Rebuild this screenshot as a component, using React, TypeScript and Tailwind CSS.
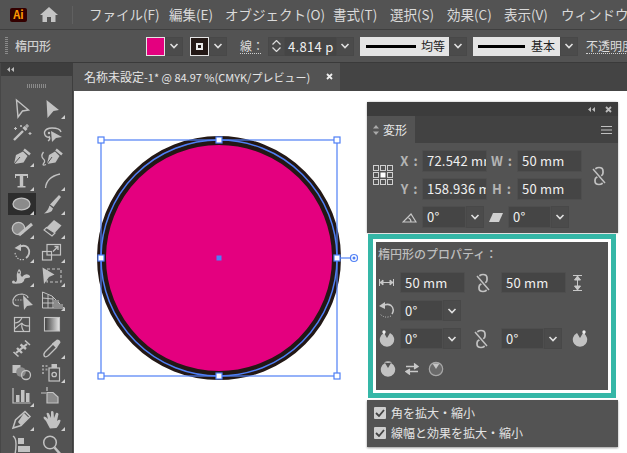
import React from "react";

const c = "#c2c2c2";
const bg = "#535353";
const jp = { fontFamily: '"Noto Sans CJK JP", "Noto Sans", sans-serif' };

const Chevron = () => (
  <svg width="10" height="6" viewBox="0 0 10 6"><path d="M1.5 1 L5 4.5 L8.5 1" fill="none" stroke="#e0e0e0" strokeWidth="1.6" /></svg>
);

const DD = ({ w = "w-[18px]", h = "h-[20px]" }: { w?: string; h?: string }) => (
  <div className={`${w} ${h} flex items-center justify-center bg-[#4b4b4b] border border-[#484848] shrink-0`}><Chevron /></div>
);

const Input = ({ children, w, h = "h-[22px]" }: { children: React.ReactNode; w: string; h?: string }) => (
  <div className={`${w} ${h} bg-[#454545] border border-[#4e4e4e] rounded-[1px] text-[#f0f0f0] text-[13px] tracking-[0.2px] pl-[4px] flex items-center overflow-hidden whitespace-nowrap shrink-0 font-['Open_Sans',sans-serif]`}>{children}</div>
);

const Combo = ({ children, w }: { children: React.ReactNode; w: string }) => (
  <div className="flex shrink-0">
    <Input w={w}>{children}</Input>
    <DD h="h-[22px]" />
  </div>
);

const Link = () => (
  <svg width="18" height="20" viewBox="0 0 18 20" fill="none" stroke={c}>
    <g strokeWidth="1.700">
      <path d="M5 6 V5 Q5 1.500 9 1.500 Q13 1.500 13 5 V7 Q13 9 11 10 L7 11 Q5 12 5 14 V15 Q5 18.500 9 18.500 Q13 18.500 13 15 V14" />
    </g>
    <path d="M3 3 L15 17" stroke={bg} strokeWidth="3.500" />
    <path d="M3 3 L15 17" strokeWidth="1.500" />
  </svg>
);

const Pie = ({ handle, outline, x = 8 }: { handle?: boolean; outline?: boolean; x?: number }) => (
  <svg width="18" height="18" viewBox="0 0 18 18">
    {outline ? (
      <>
        <circle cx="9" cy="9" r="6.7" fill="#6a6a6a" stroke="#a8a8a8" strokeWidth="1.2" />
        <path d="M5.5 3.5 L12.5 3.5 L9 9 Z" fill="#c4c4c4" />
      </>
    ) : (
      <>
        <path d="M6 3 A7.2 7.2 0 1 0 12 3 L9 8 Z" fill={c} />
        {handle && <path d={`M${x} 6 L${x} 1`} stroke={c} strokeWidth="2" />}
        {handle && <circle cx={x} cy="2" r="1.7" fill="#eee" />}
        {!handle && <path d="M5 2.5 A7.2 7.2 0 0 1 13 2.5 L9 3 Z" fill={c} />}
      </>
    )}
  </svg>
);

const Corner = () => <path d="M26 19 L26 23 L22 23 Z" fill="#cfcfcf" />;

const tools: React.ReactNode[] = [
  <path d="M8.500 4 L20.500 14 L14.500 15 L10 21 Z" fill="none" stroke={c} strokeWidth="1.400" />,
  <><path d="M7.500 4 L20 14 L14.500 15 L8.500 22 Z" fill={c} /><Corner /></>,
  <><path d="M6 20 L15 11" stroke={c} strokeWidth="2.400" /><path d="M15.500 7 L18.500 10" stroke={c} strokeWidth="3" /><path d="M19 4 V8 M17 6 H21 M7.500 7 V10 M6 8.500 H9 M22 12 V15 M20.500 13.500 H23.500 M13 5 V7 M12 6 H14" stroke={c} strokeWidth="1.100" /></>,
  <><path d="M10 17.500 Q5 17 5.500 12 Q7 8 13 8 Q21 8 22 12" fill="none" stroke={c} strokeWidth="1.400" /><path d="M10 16 Q12 19 9 21" fill="none" stroke={c} strokeWidth="1.300" /><path d="M12 11 L23 17 L17 18 L13 22 Z" fill={c} /><circle cx="10" cy="13" r="1.200" fill={c} /></>,
  <><path d="M6 20 L8 11 L15 7.500 L19.500 12 L15.500 18.500 Z" fill={c} /><path d="M16 5.500 L22 10.500" stroke={c} strokeWidth="2.500" /><path d="M6 20 L12 13" stroke={bg} strokeWidth="1" /><Corner /></>,
  <><path d="M8 20 L10 11 L16 7.500 L20.500 12 L16.500 18.500 Z" fill={c} /><path d="M17 5.500 L23 10.500" stroke={c} strokeWidth="2.500" /><path d="M8 20 L13 13" stroke={bg} strokeWidth="1" /><path d="M4.500 8 Q1.500 12 4 14.500 Q7 17 4.500 19.500 Q3 22 7 20.500" fill="none" stroke={c} strokeWidth="1.300" /></>,
  <><path d="M7 6 H20 V10 H19 V8 H15.200 V18 H17.500 V19.500 H9.500 V18 H11.800 V8 H8 V10 H7 Z" fill={c} /><Corner /></>,
  <><path d="M6.500 20 Q7.500 9 21 6" fill="none" stroke={c} strokeWidth="1.300" /><Corner /></>,
  <><ellipse cx="13.500" cy="11" rx="8.500" ry="5.800" fill="#8b8b8b" stroke={c} strokeWidth="1.300" /><path d="M26 18 L26 22 L22 22 Z" fill="#cfcfcf" /></>,
  <><path d="M20 3 L22 5 L14.500 15 L11 12.500 Z" fill={c} /><path d="M10.500 13.500 L14 16.500 Q13 21 5 21.500 Q9 19 10.500 13.500 Z" fill={c} /><Corner /></>,
  <><circle cx="10.500" cy="12.500" r="6.200" fill="#8b8b8b" stroke={c} strokeWidth="1.300" /><path d="M11 19 L24 8" stroke={c} strokeWidth="3" /><Corner /></>,
  <><path d="M15 4 L22.500 9.500 L13 20 L5 14 Z" fill={c} /><path d="M7.500 11.500 L16 17 L13 20 L5 14 Z" fill={bg} stroke={c} strokeWidth="1.100" /><Corner /></>,
  <><path d="M12 6.500 Q19 4 21 10 Q22 15 18 18" fill="none" stroke={c} strokeWidth="1.800" /><path d="M13 4 V11 L6.500 8 Z" fill={c} /><path d="M16 19.500 Q9 21 7 13" fill="none" stroke={c} strokeWidth="1.200" strokeDasharray="1.400 1.400" /><Corner /></>,
  <><rect x="3.500" y="11.500" width="9" height="8.500" fill="none" stroke={c} strokeWidth="1.200" /><rect x="8" y="4.500" width="13.500" height="10.500" fill="none" stroke={c} strokeWidth="1.200" /><path d="M14 11.500 L19 6.500 M15.500 6.500 H19 V10" fill="none" stroke={c} strokeWidth="1.300" /><Corner /></>,
  <><path d="M5 18 Q9 19 9 15 Q8 9 11 5 Q14 7 12.500 11 L14 13 Q17 9 21 11 Q24 14 19 14 Q16 14 16 17 Q14 20 10 19.500 Q7 20 5 19 Z" fill={c} /><circle cx="5.500" cy="18" r="1.500" fill={c} /><circle cx="11" cy="8.500" r=".9" fill={bg} /><Corner /></>,
  <><path d="M3.500 3.500 L15.500 10.500 L10 13 L5 20 Z" fill={c} /><rect x="8" y="5" width="14" height="13" fill="none" stroke={c} strokeWidth="1.100" strokeDasharray="3 2" /><Corner /></>,
  <><path d="M11 18 Q4 18 5 12 Q7 6 14 6 Q20 7 20 10" fill="none" stroke={c} strokeWidth="1.200" /><path d="M7 12 H15" stroke={c} strokeWidth="1.200" strokeDasharray="1.300 1.300" /><path d="M15 7 L25 17 L19 18 L16 22 Z" fill={c} /></>,
  <><path d="M3.500 4 L3.500 20 L25 20 L20 15 L13 8 Z M3.500 10 L14 11 M3.500 15 L20 15 M9 6.500 V20 M14 9 V20" fill="none" stroke={c} strokeWidth="1" /><path d="M14 12 H20 V14 H14 Z M14 16 H24 V19 H14 Z" fill="#8b8b8b" /><Corner /></>,
  <><rect x="6.500" y="5.500" width="15" height="14" fill="none" stroke={c} strokeWidth="1.200" /><path d="M6.500 11 Q12 11 14 5.500 M14 11 Q15 14 21.500 14 M6.500 17 Q11 13 14 11 M14 11 Q13 16 16 19.500" fill="none" stroke={c} strokeWidth="1.100" /></>,
  <><defs><linearGradient id="gr"><stop offset="0" stopColor="#3a3a3a" /><stop offset="1" stopColor="#e8e8e8" /></linearGradient></defs><rect x="5.500" y="5.500" width="15" height="13.500" fill="url(#gr)" stroke={c} strokeWidth="1.100" /></>,
  <><path d="M8 17 L19 8" stroke={c} strokeWidth="2.200" /><path d="M5.500 16 L10.500 20.500 M17 4.500 L22 9" stroke={c} strokeWidth="1.600" /><path d="M9 12 L14 17 M12.500 8.500 L18 13" stroke={c} strokeWidth="2.400" /></>,
  <><path d="M5.500 20.500 Q4 18.500 6 16 L14 8 L17.500 11.500 L9.500 19.500 Q7 21.500 5.500 20.500 Z" fill={bg} stroke={c} strokeWidth="1.300" /><path d="M13 7.500 L18 3.500 Q21 3.500 21.500 6.500 L18 11.500 Z" fill={c} /><Corner /></>,
  <><rect x="4.500" y="5" width="8" height="8" fill={c} /><circle cx="13" cy="12" r="4.800" fill="#8b8b8b" /><circle cx="18" cy="15" r="4.500" fill="none" stroke={c} strokeWidth="1.300" /></>,
  <><rect x="10" y="8" width="10.500" height="13" fill={bg} stroke={c} strokeWidth="1.200" /><rect x="12.500" y="4" width="5.500" height="4" fill={c} /><circle cx="15.200" cy="14.500" r="2.200" fill="none" stroke={c} strokeWidth="1.300" /><path d="M3 6 h2 M6.500 6 h2 M3 9.500 h2 M6.500 9.500 h2 M3 13 h2" stroke="#9a9a9a" strokeWidth="2" /><Corner /></>,
  <><path d="M5 4 V19 H22.500" fill="none" stroke={c} strokeWidth="1.200" /><rect x="8" y="11" width="3.500" height="7" fill={c} /><rect x="13" y="6" width="3.500" height="12" fill={c} /><rect x="18" y="9" width="3.500" height="9" fill={c} /><Corner /></>,
  <><path d="M2 9 H7 M8 3 V7" stroke={c} strokeWidth="1.200" /><path d="M8 8.500 H14 L19 13 V19 H8 Z" fill="#8b8b8b" stroke={c} strokeWidth="1.200" /></>,
  <><path d="M5 20 L7.500 12 L17 3.500 L22 8.500 L13 17.500 Z" fill={bg} stroke={c} strokeWidth="1.500" /><path d="M16 5 L20.500 9.500 L13 17.500 L10 14 Z" fill={c} /><Corner /></>,
  <><path d="M7 13 Q3.500 10 5 8.500 Q7 8.500 9 11 L7.500 5.500 Q8.500 4 10 5.500 L12 10 L12 3.500 Q13.500 2.500 14.500 4 L15 10 L17 5 Q18.500 4 19.500 6 L18 13 Q20 11 21.500 12 Q21.500 15 17.500 20 L11 20.500 Q9 17 7 13 Z" fill={c} /><Corner /></>,
  <><path d="M5 4 Q8 6 8 12 T7 22" fill="none" stroke={c} strokeWidth="1.400" /><path d="M10 6 H16 V12 H10 Z M10 14 H22 V20 H10 Z" fill={c} /></>,
  <><circle cx="11" cy="10.500" r="6.300" fill="none" stroke={c} strokeWidth="1.500" /><path d="M15.500 15.500 L22 23" stroke={c} strokeWidth="2.500" /></>,
];

const ToolIcon = ({ children, selected }: { children: React.ReactNode; selected?: boolean }) => (
  <div className="w-[28px] h-[24px] mx-auto flex items-start justify-center">
    <svg className={selected ? "bg-[#2d2d2d] mt-px" : ""} width="28" height={selected ? 22 : 24} viewBox={selected ? "0 0 28 22" : "0 0 28 24"}>{children}</svg>
  </div>
);

const menu = [
  ["ファイル(F)", "w-[80px]"],
  ["編集(E)", "w-[56px]"],
  ["オブジェクト(O)", "w-[108px]"],
  ["書式(T)", "w-[57px]"],
  ["選択(S)", "w-[57px]"],
  ["効果(C)", "w-[57px]"],
  ["表示(V)", "w-[57px]"],
  ["ウィンドウ(W)", "w-[100px]"],
];

const Canvas = () => {
  const hs = [[101, 140], [219, 140], [337, 140], [101, 258], [337, 258], [101, 376], [219, 376], [337, 376]];
  const ox = 74, oy = 91;
  return (
    <svg className="absolute left-0 top-0" width="553" height="362" viewBox={`${ox} ${oy} 553 362`}>
      <circle cx="219" cy="258" r="117.500" fill="#e4007f" stroke="#231815" strokeWidth="9" />
      <circle cx="219" cy="258" r="118" fill="none" stroke="#4f7ff5" strokeWidth="1.500" />
      <rect x="101" y="140" width="236" height="236" fill="none" stroke="#4f7ff5" strokeWidth="1.200" />
      <path d="M337 258 H350" stroke="#4f7ff5" strokeWidth="1.200" />
      <circle cx="354" cy="258" r="3.500" fill="#fff" stroke="#4f7ff5" strokeWidth="1.200" />
      <circle cx="354" cy="258" r="1.500" fill="#4f7ff5" />
      {hs.map(([x, y]) => (
        <rect key={`${x}-${y}`} x={x - 3} y={y - 3} width="6" height="6" fill="#fff" stroke="#4f7ff5" strokeWidth="1.200" />
      ))}
      <rect x="216.500" y="255.500" width="5" height="5" fill="#4f7ff5" />
    </svg>
  );
};

const Label = ({ t, w }: { t: string; w: string }) => (
  <span className={`${w} shrink-0 text-center text-[#b4b4b4] text-[13px] font-bold font-['Liberation_Sans',sans-serif] tracking-[1px] whitespace-nowrap`}>{t}</span>
);

const TransformPanel = () => (
  <div className="absolute left-[293px] top-[11px] w-[251px] h-[345px] flex flex-col" style={jp}>
    <div className="bg-[#535353] flex flex-col h-[131px] shrink-0 rounded-t-[2px] shadow-[0_0_2px_#0006]">
      <div className="h-[14px] bg-[#3c3c3c] flex items-center justify-end gap-[10px] pr-[6px] text-[#c8c8c8] shrink-0">
        <svg width="7" height="5" viewBox="0 0 7 5"><path d="M3 0 L0 2.500 L3 5 Z M7 0 L4 2.500 L7 5 Z" fill="#bbb" /></svg>
        <svg width="7" height="7" viewBox="0 0 7 7"><path d="M1 1 L6 6 M6 1 L1 6" stroke="#bbb" strokeWidth="1.800" /></svg>
      </div>
      <div className="h-[27px] bg-[#424242] flex items-center justify-between pr-[6px] shrink-0">
        <div className="w-[48px] h-full bg-[#535353] flex items-center pl-[6px] gap-[4px] text-[12px] text-[#e8e8e8]">
          <svg width="6" height="10" viewBox="0 0 6 10"><path d="M3 0 L6 3.500 H0 Z M3 10 L6 6.500 H0 Z" fill="#aaa" /></svg>
          <span>変形</span>
        </div>
        <svg width="11" height="8" viewBox="0 0 11 8"><path d="M0 .5 H11 M0 4 H11 M0 7.500 H11" stroke="#c0c0c0" strokeWidth="1" /></svg>
      </div>
      <div className="flex pl-[6px] pt-[7px]">
        <div className="w-[24px] pt-[15px] shrink-0">
          <svg width="20" height="20" viewBox="0 0 20 20" fill="none" stroke="#d0d0d0" strokeWidth="1">
            {[0, 7, 14].flatMap((y) => [0, 7, 14].map((x) => (x === 7 && y === 7 ? <rect key="m" x="7.500" y="7.500" width="5" height="5" fill="#fff" stroke="none" /> : <rect key={`${x}${y}`} x={x + .5} y={y + .5} width="5" height="5" />)))}
          </svg>
        </div>
        <div className="flex flex-col gap-[6px]">
          <div className="flex items-center">
            <Label t="X :" w="w-[25px]" />
            <Input w="w-[65px]">72.542 mm</Input>
            <Label t="W :" w="w-[30px]" />
            <Input w="w-[65px]">50 mm</Input>
          </div>
          <div className="flex items-center">
            <Label t="Y :" w="w-[25px]" />
            <Input w="w-[65px]">158.936 mm</Input>
            <Label t="H :" w="w-[30px]" />
            <Input w="w-[65px]">50 mm</Input>
          </div>
          <div className="flex items-center">
            <span className="w-[25px] flex justify-center items-center shrink-0">
              <svg width="15" height="11" viewBox="0 0 15 11"><path d="M1 10 H14 L9 2 Z M9 10 Q9 7 6.500 6" fill="none" stroke="#c8c8c8" strokeWidth="1.200" /></svg>
            </span>
            <Combo w="w-[44px]">0°</Combo>
            <span className="w-[24px] flex justify-center items-center shrink-0">
              <svg width="14" height="9" viewBox="0 0 14 9"><path d="M4 0 H14 L10 9 H0 Z" fill="#d0d0d0" /></svg>
            </span>
            <Combo w="w-[43px]">0°</Combo>
          </div>
        </div>
        <div className="ml-[8px] pt-[16px] shrink-0"><Link /></div>
      </div>
    </div>
    <div className="h-[164px] w-[248px] ml-[1px] mt-[1px] border-[5px] border-[#35b7a7] shrink-0">
      <div className="h-full border-[3px] border-white bg-[#535353] pl-[2px] pt-px">
        <div className="h-[22px] text-[12px] text-[#bdbdbd] leading-[22px] font-medium">楕円形のプロパティ：</div>
        <div className="flex items-center mt-[7px] h-[21px]">
          <div className="w-[22px] pl-[1px] shrink-0">
            <svg width="15" height="7" viewBox="0 0 15 7"><path d="M0.500 0 V7 M14.500 0 V7 M1 3.500 H14 M1 3.500 L4 1 V6 Z M14 3.500 L11 1 V6 Z" fill="#c8c8c8" stroke="#c8c8c8" strokeWidth="1" /></svg>
          </div>
          <Input w="w-[65px]" h="h-[21px]">50 mm</Input>
          <div className="w-[36px] flex justify-center shrink-0"><Link /></div>
          <Input w="w-[65px]" h="h-[21px]">50 mm</Input>
          <svg className="ml-[7px]" width="9" height="16" viewBox="0 0 9 16"><path d="M0 .5 H9 M0 15.500 H9 M4.500 1 V15 M4.500 1 L1.500 5 H7.500 Z M4.500 15 L1.500 11 H7.500 Z" fill="#c8c8c8" stroke="#c8c8c8" strokeWidth="1" /></svg>
        </div>
        <div className="flex items-center mt-[7px] h-[21px]">
          <div className="w-[22px] shrink-0">
            <svg width="17" height="17" viewBox="0 0 17 17" fill="none"><path d="M5 4 Q9 1 13 3.500 Q17 7 14 12" stroke="#c8c8c8" strokeWidth="1.500" /><path d="M7 0 V7 L1 4 Z" fill="#c8c8c8" /><path d="M13 14 Q7 17 2 12" stroke="#c8c8c8" strokeWidth="1" strokeDasharray="1 1.500" /></svg>
          </div>
          <Input w="w-[43px]" h="h-[21px]">0°</Input>
          <DD h="h-[21px]" />
        </div>
        <div className="flex items-center mt-[7px] h-[21px]">
          <div className="w-[22px] shrink-0"><Pie handle x={6} /></div>
          <Input w="w-[43px]" h="h-[21px]">0°</Input>
          <DD h="h-[21px]" />
          <div className="w-[40px] flex justify-center shrink-0"><Link /></div>
          <Input w="w-[43px]" h="h-[21px]">0°</Input>
          <DD h="h-[21px]" />
          <div className="ml-[9px]"><Pie handle x={13} /></div>
        </div>
        <div className="flex items-center mt-[11px] gap-[8px] pl-[1px]">
          <Pie />
          <svg width="14" height="12" viewBox="0 0 14 12"><path d="M1 3.500 H13 M9 .5 L13 3.500 L9 6 M13 8.500 H1 M5 6 L1 8.500 L5 11.500" fill="#c8c8c8" stroke="#c8c8c8" strokeWidth="1.400" /></svg>
          <Pie outline />
        </div>
      </div>
    </div>
    <div className="mt-[2px] h-[47px] bg-[#535353] shrink-0 pl-[7px] pt-[3px] text-[12px] text-[#e4e4e4] flex flex-col shadow-[0_1px_2px_#0006]">
      {["角を拡大・縮小", "線幅と効果を拡大・縮小"].map((t) => (
        <div key={t} className="flex items-center gap-[5px] h-[20px]">
          <div className="w-[12px] h-[12px] bg-[#cfcfcf] rounded-[1px] flex items-center justify-center">
            <svg width="10" height="8" viewBox="0 0 10 8"><path d="M1 4 L4 7 L9 1" fill="none" stroke="#444" strokeWidth="1.800" /></svg>
          </div>
          <span>{t}</span>
        </div>
      ))}
    </div>
  </div>
);

export default function App() {
  return (
    <div className="w-[627px] h-[453px] overflow-hidden bg-[#535353] flex flex-col" style={jp}>
      {/* menu bar */}
      <div className="h-[30px] flex items-center shrink-0 border-b border-[#3f3f3f] overflow-hidden [&>*]:shrink-0">
        <div className="w-[10px]" />
        <div className="w-[17px] h-[14px] bg-[#330000] rounded-[2px] flex items-center justify-center text-[#ff9a00] text-[11px] font-bold leading-none font-['Liberation_Sans',sans-serif]">Ai</div>
        <svg className="ml-[13px]" width="18" height="15" viewBox="0 0 18 15"><path d="M9 0 L18 8 H15.500 V15 H11 V10 H7 V15 H2.500 V8 H0 Z" fill="#c4c4c4" /></svg>
        <div className="ml-[14px] w-px h-[18px] bg-[#606060]" />
        <div className="ml-[16px] flex text-[13.5px] text-[#dadada] whitespace-nowrap [&>*]:shrink-0">
          {menu.map(([t, w]) => <div key={t} className={w}>{t}</div>)}
        </div>
      </div>
      {/* control bar */}
      <div className="h-[33px] flex items-center shrink-0 border-b border-[#3a3a3a] whitespace-nowrap overflow-hidden [&>*]:shrink-0">
        <div className="ml-[5px] w-[3px] h-[18px] bg-[repeating-linear-gradient(#8a8a8a_0_1px,transparent_1px_2px)]" />
        <div className="ml-[7px] w-[131px] text-[12px] text-[#cfcfcf] font-medium">楕円形</div>
        <div className="w-[19px] h-[19px] bg-[#e4007f] border border-[#e4e4e4]" />
        <DD h="h-[19px]" />
        <div className="ml-[7px] w-[19px] h-[19px] bg-[#231815] border border-[#e4e4e4] flex items-center justify-center">
          <div className="w-[7px] h-[7px] border-2 border-[#e8e8e8]" />
        </div>
        <DD h="h-[19px]" />
        <div className="ml-[13px] text-[12px] text-[#dedede] border-b border-dotted border-[#d0d0d0] leading-[15px] w-[21px]">線：</div>
        <div className="ml-[7px] w-[17px] h-[19px] bg-[#4b4b4b] border border-[#484848] flex flex-col items-center justify-center gap-[2px]">
          <svg width="9" height="5" viewBox="0 0 9 5"><path d="M.5 4.500 L4.500 .5 L8.500 4.500" fill="none" stroke="#ddd" strokeWidth="1.200" /></svg>
          <svg width="9" height="5" viewBox="0 0 9 5"><path d="M.5 .5 L4.500 4.500 L8.500 .5" fill="none" stroke="#ddd" strokeWidth="1.200" /></svg>
        </div>
        <div className="w-[51px] h-[19px] bg-[#454545] text-[13px] text-[#f0f0f0] pl-[3px] leading-[19px] font-['Open_Sans',sans-serif] tracking-[0.3px] overflow-hidden">4.814 p</div>
        <DD h="h-[19px]" />
        <div className="ml-[6px] w-[89px] h-[19px] bg-[#e4e4e4] flex items-center justify-between pl-[6px] pr-[4px] text-[12px] text-[#222]">
          <div className="w-[50px] h-[3px] bg-[#000]" />
          <span>均等</span>
        </div>
        <DD h="h-[19px]" />
        <div className="ml-[6px] w-[87px] h-[19px] bg-[#e4e4e4] flex items-center justify-between pl-[5px] pr-[5px] text-[12px] text-[#222]">
          <div className="w-[47px] h-[3px] bg-[#000]" />
          <span>基本</span>
        </div>
        <DD h="h-[19px]" />
        <div className="ml-[8px] text-[12px] text-[#dedede] border-b border-dotted border-[#d0d0d0] leading-[15px]">不透明度</div>
      </div>
      {/* body */}
      <div className="flex-1 flex min-h-0">
        <div className="w-[73px] shrink-0 flex flex-col overflow-hidden border-r border-[#3e3e3e] border-l border-l-[#474747]">
          <div className="h-[13px] bg-[#3e3e3e] flex items-center pl-[6px] shrink-0">
            <svg width="7" height="5" viewBox="0 0 7 5"><path d="M3 0 L0 2.500 L3 5 Z M7 0 L4 2.500 L7 5 Z" fill="#bbb" /></svg>
          </div>
          <div className="h-[20px] shrink-0 flex items-center justify-center">
            <div className="w-[19px] h-[4px] bg-[repeating-linear-gradient(90deg,#8a8a8a_0_1px,transparent_1px_2px)]" />
          </div>
          <div className="grid grid-cols-[31px_31px] auto-rows-[24px] pl-[5px]">
            {tools.map((t, i) => <ToolIcon key={i} selected={i === 8}>{t}</ToolIcon>)}
          </div>
        </div>
        <div className="flex-1 flex flex-col min-w-0 ml-[1px]">
          <div className="h-[28px] bg-[#444444] shrink-0 flex">
            <div className="w-[266px] bg-[#535353] flex items-center pl-[10px] text-[11px] text-[#e6e6e6] whitespace-nowrap relative">
              <span className="text-[12px]">名称未設定</span>-1* @ 84.97 %(CMYK/プレビュー)
              <svg className="absolute right-[7px] top-[10px]" width="7" height="7" viewBox="0 0 7 7"><path d="M1 1 L6 6 M6 1 L1 6" stroke="#eee" strokeWidth="1.800" /></svg>
            </div>
          </div>
          <div className="flex-1 bg-white relative">
            <Canvas />
            <TransformPanel />
          </div>
        </div>
      </div>
    </div>
  );
}
